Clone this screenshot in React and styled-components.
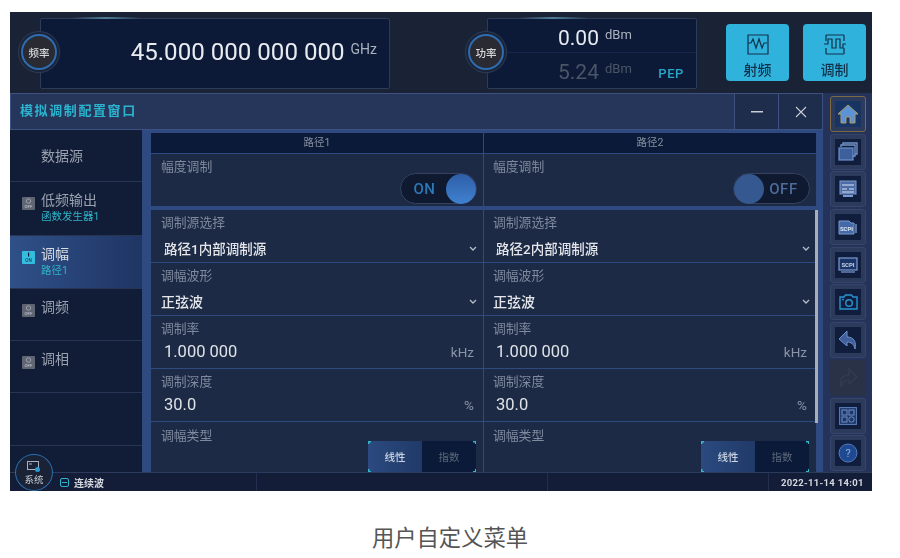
import React from "react";
import styled, { createGlobalStyle } from "styled-components";

const Global = createGlobalStyle`
  html, body { margin: 0; padding: 0; background: #fff; }
  body { font-family: Roboto, "Noto Sans CJK SC", sans-serif; }
`;
const CJK = `Roboto, "Noto Sans CJK SC", sans-serif`;

const Page = styled.div`
  width: 900px; height: 558px; padding: 12px 28px 0 10px; box-sizing: border-box; overflow: hidden;
`;
const Screen = styled.div`
  width: 862px; height: 479px; background: #1a2336; display: flex; flex-direction: column;
  position: relative; filter: blur(0.5px); overflow: hidden;
`;
const Top = styled.header`
  height: 81px; flex: none; display: flex; padding: 6px 6px 4px 30px; box-sizing: border-box; align-items: stretch;
`;
const Readout = styled.div`
  position: relative; box-sizing: border-box; width: ${p => p.$w}px; margin-right: ${p => p.$mr}px;
  background: #0c1a38; border: 1.5px solid #2c3b58; border-radius: 2px;
  &::before { content: ""; position: absolute; top: -2px; left: 30px; width: 70px; height: 1.5px;
    background: linear-gradient(90deg, transparent, #4f7d96, transparent); }
`;
const Badge = styled.div`
  position: absolute; left: ${p => p.$left}px; top: 22px; width: 36px; height: 36px; border-radius: 50%;
  background: #2a2a33; border: 2px solid #2d6cb0; box-sizing: border-box; box-shadow: 0 0 0 2px #1a2336, 0 0 0 3px #2c3b58;
  display: flex; align-items: center; justify-content: center; color: #d6d8dc; font-size: 10.5px; font-weight: 500; font-family: ${CJK};
`;
const FreqValue = styled.div`
  position: absolute; right: 12px; top: 17px; display: flex; align-items: baseline; gap: 6px; color: #e8ebf0;
  font-size: 24.1px; line-height: 32px; white-space: nowrap;
`;
const Unit = styled.span`
  font-size: ${p => p.$size || 14}px; color: ${p => p.$color || "#aab2c0"}; position: relative; top: -6px;
`;
const PowerLine = styled.div`
  height: ${p => p.$dim ? 36 : 34}px; box-sizing: border-box; padding: 2px 0 0 70px; display: flex; align-items: baseline; gap: 6px;
  font-size: 21px; line-height: 34px; color: ${p => p.$dim ? "#4a5566" : "#e8ebf0"};
  ${p => p.$dim ? "" : "border-bottom: 1px solid #17264a;"}
`;
const Pep = styled.span`
  position: absolute; right: 12px; bottom: 7px; color: #2aa6c8; font-size: 13px; letter-spacing: .6px; font-weight: 500;
`;
const ModeButton = styled.button`
  width: 63px; height: 57px; margin: 6px 13px 0 1px; padding: 10px 0 0; border: 0; border-radius: 4px; background: #2fb2dc;
  display: flex; flex-direction: column; align-items: center; gap: 4px; color: #12304a; font: 500 14px ${CJK};
  &:last-child { margin-right: 0; }
  svg { display: block; }
`;
const TitleBar = styled.div`
  height: 37px; width: 813px; flex: none; box-sizing: border-box; background: #26365a; border: 1px solid #3d5282; border-width: 1.5px 1px 1px;
  display: flex; align-items: center; padding-left: 9px; justify-content: space-between;
`;
const Title = styled.div`
  color: #2bb4d0; font: 700 13px ${CJK}; letter-spacing: 1.6px; margin-bottom: 4px;
`;
const WinButtons = styled.div` display: flex; height: 100%; `;
const WinButton = styled.div`
  width: 44px; box-sizing: border-box; background: #1f2d4d; border-left: 1.5px solid #3d5282;
  display: flex; align-items: center; justify-content: center; color: #c8ccd4;
`;
const Rail = styled.aside`
  position: absolute; right: 0; top: 81px; bottom: 19px; width: 49px; background: #25335a; box-sizing: border-box;
  padding: 3px 6px 0 7px; display: flex; flex-direction: column; gap: 1.7px;
`;
const RailButton = styled.div`
  width: 36px; height: 36px; flex: none; box-sizing: border-box; border-radius: 3px; padding: 4px;
  border: 1.5px solid ${p => p.$active ? "#7d6a42" : p.$off ? "#293247" : "#36466a"};
  background: ${p => p.$off ? "#293247" : "#2c3a5c"};
  display: flex;
`;
const RailInner = styled.div`
  flex: 1; background: ${p => p.$active ? "#173462" : p.$off ? "#293247" : "#101d3d"};
  display: flex; align-items: center; justify-content: center;
  svg { display: block; overflow: visible; }
`;
const Body = styled.div` flex: 1; min-height: 0; width: 813px; display: flex; background: #2f4a80; `;
const Nav = styled.nav`
  width: 132px; flex: none; background: #111c36; display: flex; flex-direction: column;
`;
const NavItem = styled.div`
  height: ${p => p.$h || 53}px; flex: none; box-sizing: border-box; border-bottom: 1px solid #263553;
  padding: ${p => p.$pad ?? "8px 0 0 12px"}; display: flex; gap: 6px;
  background: ${p => p.$active ? "linear-gradient(90deg,#2f5088,#1f3564)" : "transparent"};
`;
const NavIcon = styled.div`
  width: 13px; height: 13px; margin-top: 7px; flex: none; border-radius: 1px; background: ${p => p.$on ? "#35bde0" : "#5f6672"};
  svg { display: block; }
`;
const NavText = styled.div` display: flex; flex-direction: column; `;
const NavLabel = styled.div` color: ${p => p.$on ? "#d7dbe2" : "#9aa2b0"}; font: 14px/20px ${CJK}; `;
const NavSub = styled.div` color: #2fb4c9; font: 10.5px/14px ${CJK}; `;
const Content = styled.main`
  margin-left: 9px; width: 665px; padding-top: 3px; display: flex; flex-direction: column; overflow: hidden;
`;
const Grid = styled.div`
  display: grid; grid-template-columns: 332px 332px; column-gap: 1px; row-gap: 1px;
  margin-top: ${p => p.$mt ?? 0}px; margin-bottom: ${p => p.$mb ?? 0}px;
`;
const HeadCell = styled.div`
  height: 20px; background: #0b1a38; color: #8790a0; font: 10.5px/20px ${CJK}; text-align: center;
`;
const Cell = styled.div`
  position: relative; height: 52px; background: #1c2a45; box-sizing: border-box; padding-left: 10px;
  &:nth-child(even) { padding-left: 9px; }
`;
const Label = styled.div` color: #7f8a9e; font: 12.8px/16px ${CJK}; padding-top: ${p => p.$pt ?? 5}px; `;
const Select = styled.div`
  color: #e4e6ea; font: 500 ${p => p.$inset ? 13.5 : 14}px/20px ${CJK}; padding: 8px 0 0 ${p => p.$inset ? 3 : 0}px;
`;
const Number = styled.div` color: #dfe2e7; font: 16.5px/22px Roboto, sans-serif; padding: 4px 0 0 3px; `;
const Right = styled.span`
  position: absolute; right: 9px; top: 28px; color: #8b94a6; font: 13.5px/16px Roboto, sans-serif;
`;
const Chevron = styled.svg` position: absolute; right: 6px; top: 36px; `;
const Toggle = styled.div`
  position: absolute; right: 6px; bottom: 2px; width: 77px; height: 31px; border-radius: 16px; box-sizing: border-box;
  background: #0f1a30; border: 1px solid #34425f; display: flex; align-items: center;
  flex-direction: ${p => p.$on ? "row" : "row-reverse"}; font: 500 15px Roboto, sans-serif; letter-spacing: .6px;
  color: ${p => p.$on ? "#2e78b8" : "#4d6c9a"};
`;
const ToggleText = styled.span`
  flex: 1; text-align: center; ${p => p.$on ? "padding-left: 2px;" : "padding-right: 6px;"}
`;
const Knob = styled.div`
  width: 30px; height: 30px; border-radius: 50%; flex: none;
  background: ${p => p.$on ? "linear-gradient(#2f5ea8,#3f82d0)" : "#34588f"};
`;
const Segment = styled.div`
  position: absolute; right: 7px; top: 19px; width: 108px; height: 31px; display: flex; background: #0b1a38;
  &::before { content: ""; position: absolute; inset: 0; pointer-events: none; background:
    linear-gradient(#35b6c9,#35b6c9) 0 0/3px 1.5px no-repeat, linear-gradient(#35b6c9,#35b6c9) 0 0/1.5px 3px no-repeat,
    linear-gradient(#35b6c9,#35b6c9) 100% 0/3px 1.5px no-repeat, linear-gradient(#35b6c9,#35b6c9) 100% 0/1.5px 3px no-repeat,
    linear-gradient(#35b6c9,#35b6c9) 0 100%/3px 1.5px no-repeat, linear-gradient(#35b6c9,#35b6c9) 0 100%/1.5px 3px no-repeat,
    linear-gradient(#35b6c9,#35b6c9) 100% 100%/3px 1.5px no-repeat, linear-gradient(#35b6c9,#35b6c9) 100% 100%/1.5px 3px no-repeat; }
`;
const SegItem = styled.div`
  width: 54px; display: flex; align-items: center; justify-content: center; font: ${p => p.$on ? 500 : 400} 10.5px ${CJK};
  color: ${p => p.$on ? "#c9d3e2" : "#5c6678"};
  background: ${p => p.$on ? "linear-gradient(90deg,#2c4a80,#203a68)" : "transparent"};
`;
const Scroll = styled.div`
  position: absolute; left: 805px; top: 198px; width: 3px; height: 213px; background: #a8adb6; z-index: 2;
`;
const Status = styled.footer`
  position: absolute; left: 0; right: 0; bottom: 0; height: 19px; background: #141d38; border-top: 1px solid #2c3b5c; box-sizing: border-box;
  display: flex; align-items: center; color: #d5d8df; font: 700 10px ${CJK}; z-index: 3;
`;
const Mode = styled.div` margin-left: 50px; width: 197px; height: 100%; display: flex; align-items: center; gap: 5px; border-right: 1px solid #232f4e; box-sizing: border-box;`;
const StatusCell = styled.div` width: ${p => p.$w}px; height: 100%; border-right: 1px solid #232f4e; box-sizing: border-box;`;
const Clock = styled.div` margin-left: 12px; font: 700 9.5px Roboto, sans-serif; letter-spacing: .3px; white-space: nowrap; `;
const SysBadge = styled.div`
  position: absolute; left: 5px; bottom: 0; width: 38px; height: 37px; border-radius: 50%; z-index: 4; box-sizing: border-box;
  background: #1a2336; border: 1.5px solid #2a6fb0; display: flex; flex-direction: column; align-items: center; padding-top: 6px;
  color: #c8ccd4; font: 9.5px/11px ${CJK};
  svg { display: block; margin-bottom: 1px; }
`;
const Caption = styled.div`
  text-align: center; margin: 32px -28px 0 -10px; color: #555; font: 22.3px/30px ${CJK};
`;

const Off = () => (
  <svg width="13" height="13" viewBox="0 0 13 13">
    <circle cx="6.5" cy="4" r="2.2" fill="none" stroke="#aab" strokeWidth=".8" />
    <text x="6.5" y="11" textAnchor="middle" fontSize="4.4" fill="#ccd" fontFamily="Roboto">OFF</text>
  </svg>
);
const On = () => (
  <svg width="13" height="13" viewBox="0 0 13 13">
    <rect x="6" y="1.5" width="1.2" height="4" fill="#123" />
    <text x="6.5" y="11" textAnchor="middle" fontSize="4.6" fill="#123" fontFamily="Roboto">ON</text>
  </svg>
);

const stroke = { fill: "none", stroke: "#6f92c8", strokeWidth: 1.4 };
const railIcons = [
  <svg width="22" height="20" viewBox="0 0 22 20"><path d="M11 1 1 10h3v9h5v-6h4v6h5v-9h3z" fill="#5b93d6" stroke="#b09a66" strokeWidth="1"/></svg>,
  <svg width="20" height="19" viewBox="0 0 20 19"><path d="M5 3V1h14v11h-2M3 5V3h14v11h-2" {...stroke}/><rect x="1" y="6" width="14" height="12" fill="#3d5f9c" stroke="#6f92c8" strokeWidth="1.2"/></svg>,
  <svg width="18" height="18" viewBox="0 0 18 18"><rect x="1" y="1" width="16" height="13" fill="#4c6ca6" stroke="#7b9bd0"/><path d="M3 5h12M3 9h5M10 9h5M3 12h12" stroke="#dbe4f2" strokeWidth="1"/><path d="M4 16h10" stroke="#7b9bd0" strokeWidth="2"/></svg>,
  <svg width="20" height="16" viewBox="0 0 20 16"><path d="M1 15V2h10l2 2h3v11z" fill="#4468a8" stroke="#7b9bd0"/><path d="M18 5v9" stroke="#7b9bd0" strokeWidth="1.4"/><text x="8.5" y="12" textAnchor="middle" fontSize="6" fontWeight="700" fill="#dbe4f2" fontFamily="Roboto">SCPI</text></svg>,
  <svg width="20" height="16" viewBox="0 0 20 16"><rect x="1" y="1" width="18" height="12" fill="#1d3566" stroke="#7b9bd0" strokeWidth="1.2"/><text x="10" y="10" textAnchor="middle" fontSize="6" fontWeight="700" fill="#c6d4ea" fontFamily="Roboto">SCPI</text><path d="M3 15h14" stroke="#7b9bd0" strokeWidth="1.2"/></svg>,
  <svg width="19" height="16" viewBox="0 0 19 16"><path d="M1 3h4l1.5-2h6L14 3h4v12H1z" fill="none" stroke="#2a94cf" strokeWidth="1.4"/><circle cx="10" cy="9" r="3.3" fill="none" stroke="#2a94cf" strokeWidth="1.4"/><circle cx="4" cy="5.5" r="1" fill="#2a94cf"/></svg>,
  <svg width="20" height="20" viewBox="0 0 20 20"><path d="M9 1 1 9l8 7v-4c4 0 7 2 8 7 1.5-7-1-12-8-12z" fill="#3f5f9b" stroke="#6f92c8" strokeWidth="1"/></svg>,
  <svg width="20" height="20" viewBox="0 0 20 20"><path d="M11 1l8 8-8 7v-4c-4 0-7 2-8 7-1.5-7 1-12 8-12z" fill="none" stroke="#343d50" strokeWidth="1.2"/></svg>,
  <svg width="18" height="18" viewBox="0 0 18 18"><rect x=".6" y=".6" width="16.8" height="16.8" fill="#1e3768" stroke="#5f82bd"/><rect x="3" y="3" width="5" height="5" {...stroke} strokeWidth="1"/><rect x="10" y="3" width="5" height="5" {...stroke} strokeWidth="1"/><rect x="3" y="10" width="5" height="5" {...stroke} strokeWidth="1"/><circle cx="12.5" cy="12.5" r="2.7" {...stroke} strokeWidth="1"/></svg>,
  <svg width="20" height="20" viewBox="0 0 20 20"><circle cx="10" cy="10" r="9" fill="#1f4a92" stroke="#4f7cc0" strokeWidth="1"/><text x="10" y="14" textAnchor="middle" fontSize="11" fill="#8fb0de" fontFamily="Roboto">?</text></svg>,
];

const Arrow = () => (
  <Chevron width="8" height="6" viewBox="0 0 8 6"><path d="M1 1l3 3 3-3" fill="none" stroke="#b6bcc8" strokeWidth="1.3"/></Chevron>
);

export default function App() {
  return (
    <Page>
      <Global />
      <Screen>
        <Top>
          <Readout $w={350} $mr={97}>
            <FreqValue>45.000 000 000 000<Unit>GHz</Unit></FreqValue>
          </Readout>
          <Readout $w={210} $mr={28}>
            <PowerLine>0.00<Unit $size={13}>dBm</Unit></PowerLine>
            <PowerLine $dim>5.24<Unit $size={13} $color="#4a5566">dBm</Unit></PowerLine>
            <Pep>PEP</Pep>
          </Readout>
          <ModeButton>
            <svg width="22" height="21" viewBox="0 0 22 21"><path d="M1 1h20v19H1z" fill="none" stroke="#12304a" strokeWidth="1.2"/><path d="M1 9h3l2-4 3 9 3-9 3 9 2-5h3" fill="none" stroke="#12304a" strokeWidth="1.2"/></svg>
            射频
          </ModeButton>
          <ModeButton>
            <svg width="24" height="21" viewBox="0 0 24 21"><path d="M3 1h18M3 20h18M3 1v6M3 14v6M21 1v6M21 14v6" fill="none" stroke="#12304a" strokeWidth="1.2"/><path d="M1 10h4V5h4v9h4V5h4v9h3v-4h3" fill="none" stroke="#12304a" strokeWidth="1.2"/></svg>
            调制
          </ModeButton>
        </Top>
        <Badge $left={11}>频率</Badge>
        <Badge $left={458}>功率</Badge>
        <TitleBar>
          <Title>模拟调制配置窗口</Title>
          <WinButtons>
            <WinButton><svg width="12" height="2"><rect width="12" height="1.5" fill="#c8ccd4"/></svg></WinButton>
            <WinButton><svg width="12" height="12" viewBox="0 0 12 12"><path d="M1 1l10 10M11 1 1 11" stroke="#c8ccd4" strokeWidth="1.1"/></svg></WinButton>
          </WinButtons>
        </TitleBar>
        <Body>
          <Nav>
            <NavItem $pad="16px 0 0 31px" $h={52}><NavLabel>数据源</NavLabel></NavItem>
            <NavItem $h={54}>
              <NavIcon><Off /></NavIcon>
              <NavText><NavLabel>低频输出</NavLabel><NavSub>函数发生器1</NavSub></NavText>
            </NavItem>
            <NavItem $active>
              <NavIcon $on><On /></NavIcon>
              <NavText><NavLabel $on>调幅</NavLabel><NavSub>路径1</NavSub></NavText>
            </NavItem>
            <NavItem $h={52}><NavIcon><Off /></NavIcon><NavLabel>调频</NavLabel></NavItem>
            <NavItem $h={52}><NavIcon><Off /></NavIcon><NavLabel>调相</NavLabel></NavItem>
            <NavItem />
            <NavItem />
          </Nav>
          <Content>
            <Grid>
              <HeadCell>路径1</HeadCell><HeadCell>路径2</HeadCell>
            </Grid>
            <Grid $mt={1} $mb={4}>
              <Cell><Label>幅度调制</Label><Toggle $on><ToggleText $on>ON</ToggleText><Knob $on /></Toggle></Cell>
              <Cell><Label>幅度调制</Label><Toggle><ToggleText>OFF</ToggleText><Knob /></Toggle></Cell>
            </Grid>
            <Grid>
              <Cell><Label>调制源选择</Label><Select $inset>路径1内部调制源</Select><Arrow /></Cell>
              <Cell><Label>调制源选择</Label><Select $inset>路径2内部调制源</Select><Arrow /></Cell>
              <Cell><Label>调幅波形</Label><Select>正弦波</Select><Arrow /></Cell>
              <Cell><Label>调幅波形</Label><Select>正弦波</Select><Arrow /></Cell>
              <Cell><Label>调制率</Label><Number>1.000 000</Number><Right>kHz</Right></Cell>
              <Cell><Label>调制率</Label><Number>1.000 000</Number><Right>kHz</Right></Cell>
              <Cell><Label>调制深度</Label><Number>30.0</Number><Right>%</Right></Cell>
              <Cell><Label>调制深度</Label><Number>30.0</Number><Right>%</Right></Cell>
              <Cell><Label $pt={6}>调幅类型</Label><Segment><SegItem $on>线性</SegItem><SegItem>指数</SegItem></Segment></Cell>
              <Cell><Label $pt={6}>调幅类型</Label><Segment><SegItem $on>线性</SegItem><SegItem>指数</SegItem></Segment></Cell>
            </Grid>
          </Content>
        </Body>
        <Scroll />
        <Rail>
          {railIcons.map((icon, i) => (
            <RailButton key={i} $active={i === 0} $off={i === 7}>
              <RailInner $active={i === 0} $off={i === 7}>{icon}</RailInner>
            </RailButton>
          ))}
        </Rail>
        <Status>
          <Mode>
            <svg width="9" height="9" viewBox="0 0 9 9"><rect x=".5" y=".5" width="8" height="8" rx="1.5" fill="none" stroke="#2fb4d0"/><path d="M2 4.5h5" stroke="#2fb4d0"/></svg>
            连续波
          </Mode>
          <StatusCell $w={291} />
          <StatusCell $w={221} />
          <Clock>2022-11-14 14:01</Clock>
        </Status>
        <SysBadge>
          <svg width="14" height="12" viewBox="0 0 14 12"><rect x=".5" y=".5" width="11" height="8" fill="none" stroke="#aab2c0"/><path d="M2 3h3" stroke="#aab2c0"/><circle cx="10.5" cy="8.5" r="2.5" fill="#2a9ad0"/></svg>
          系统
        </SysBadge>
      </Screen>
      <Caption>用户自定义菜单</Caption>
    </Page>
  );
}
